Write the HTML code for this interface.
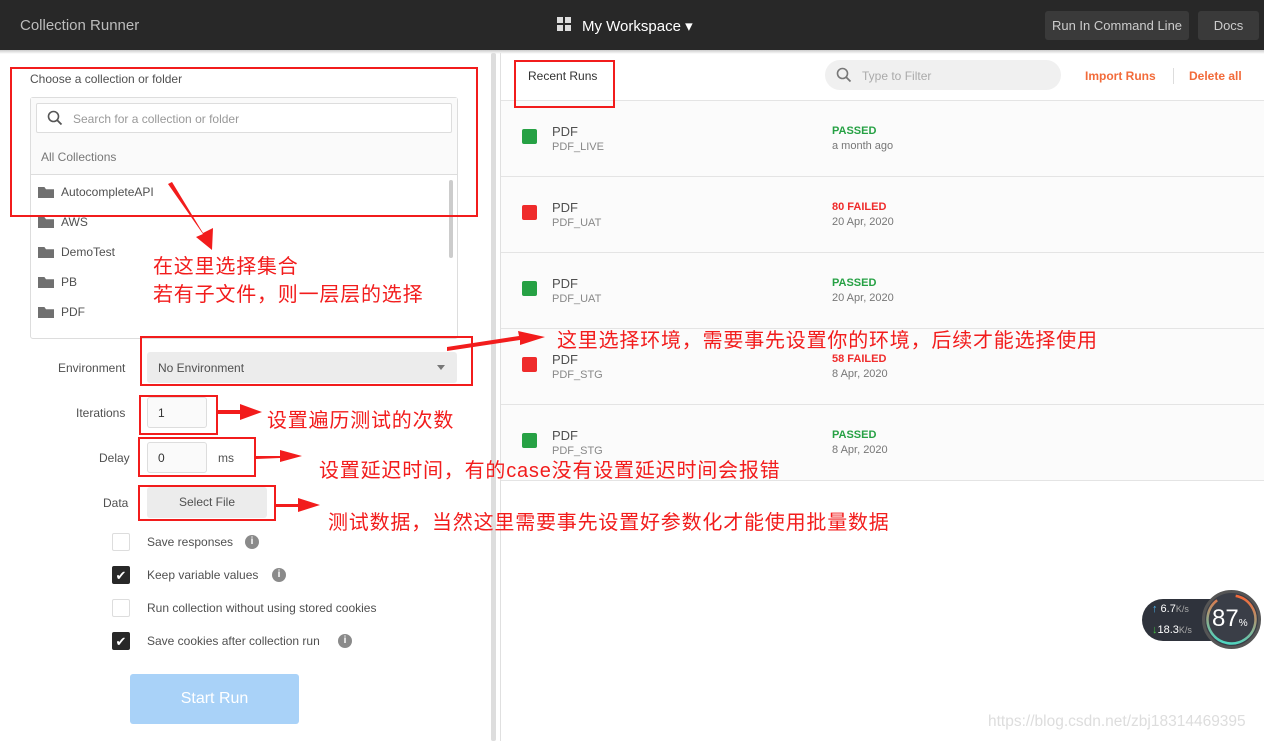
<!DOCTYPE html><html><head><meta charset="utf-8"><style>
*{box-sizing:border-box}body{margin:0;width:1264px;height:741px;overflow:hidden;background:#fff;font-family:"Liberation Sans","Noto Sans CJK SC",sans-serif;position:relative;color:#505050}
.a{position:absolute}
.hd{left:0;top:0;width:1264px;height:50px;background:#282828}
.s{font-size:12px;color:#505050}
.red{border:2px solid #f21c1c}
.cn{color:#f21c1c;font-size:20px;letter-spacing:0.8px;font-family:"Liberation Sans","Noto Sans CJK SC",sans-serif;white-space:nowrap}
.fold{width:16px;height:11px;background:#707070;clip-path:polygon(0 0,40% 0,50% 20%,100% 20%,100% 100%,0 100%)}
.row{left:501px;width:763px;height:76px;border-bottom:1px solid #e4e4e4;background:#fbfbfb}
.sq{width:15px;height:15px;border-radius:2px}
.cb{width:18px;height:18px;border:1px solid #ddd;border-radius:2px;background:#fff}
.cbk{background:#282828;border-color:#282828;color:#fff;font-size:13px;text-align:center;line-height:17px}
.info{width:14px;height:14px;border-radius:50%;background:#8a8a8a;color:#fff;font-size:10px;font-weight:bold;text-align:center;line-height:14px}
</style></head><body>
<div class="a hd"></div>
<div class="a" style="left:20px;top:17px;color:#bcbcbc;font-size:15px">Collection Runner</div>
<div class="a" style="left:557px;top:17px;width:14px;height:14px;display:grid;grid-template-columns:6px 6px;gap:2px"><i style="background:#ddd"></i><i style="background:#ddd"></i><i style="background:#ddd"></i><i style="background:#ddd"></i></div>
<div class="a" style="left:582px;top:17px;color:#fff;font-size:15px">My Workspace ▾</div>
<div class="a" style="left:1045px;top:11px;width:144px;height:29px;background:#3a3a3a;border-radius:3px;color:#ccc;font-size:13px;text-align:center;line-height:29px">Run In Command Line</div>
<div class="a" style="left:1198px;top:11px;width:61px;height:29px;background:#3a3a3a;border-radius:3px;color:#ccc;font-size:13px;text-align:center;line-height:29px">Docs</div>
<div class="a" style="left:0;top:50px;width:1264px;height:4px;background:linear-gradient(#ccc,#fff)"></div>
<div class="a s" style="left:30px;top:72px">Choose a collection or folder</div>
<div class="a" style="left:30px;top:97px;width:428px;height:242px;border:1px solid #ddd;border-radius:3px;background:#fff"></div>
<div class="a" style="left:31px;top:98px;width:426px;height:77px;background:#fafafa;border-bottom:1px solid #ddd"></div>
<div class="a" style="left:36px;top:103px;width:416px;height:30px;border:1px solid #ddd;border-radius:2px;background:#fff"></div>
<svg class="a" style="left:47px;top:110px" width="16" height="16"><circle cx="6.5" cy="6.5" r="5" fill="none" stroke="#555" stroke-width="1.6"/><path d="M10 10l4.5 4.5" stroke="#555" stroke-width="1.8"/></svg>
<div class="a s" style="left:73px;top:112px;color:#999">Search for a collection or folder</div>
<div class="a s" style="left:41px;top:150px;color:#777">All Collections</div>
<div class="a" style="left:449px;top:180px;width:4px;height:78px;background:#ccc;border-radius:2px"></div>
<div class="a fold" style="left:38px;top:187px"></div><div class="a s" style="left:61px;top:185px">AutocompleteAPI</div>
<div class="a fold" style="left:38px;top:217px"></div><div class="a s" style="left:61px;top:215px">AWS</div>
<div class="a fold" style="left:38px;top:247px"></div><div class="a s" style="left:61px;top:245px">DemoTest</div>
<div class="a fold" style="left:38px;top:277px"></div><div class="a s" style="left:61px;top:275px">PB</div>
<div class="a fold" style="left:38px;top:307px"></div><div class="a s" style="left:61px;top:305px">PDF</div>
<div class="a" style="left:491px;top:53px;width:5px;height:688px;background:#ddd;border-radius:2px"></div>
<div class="a s" style="left:58px;top:361px">Environment</div>
<div class="a" style="left:147px;top:352px;width:310px;height:31px;background:#ececec;border-radius:3px"></div>
<div class="a s" style="left:158px;top:361px">No Environment</div>
<div class="a" style="left:437px;top:365px;border:4px solid transparent;border-top:5px solid #777"></div>
<div class="a s" style="left:76px;top:406px">Iterations</div>
<div class="a" style="left:147px;top:397px;width:60px;height:31px;border:1px solid #ddd;border-radius:3px;background:#fafafa"></div>
<div class="a s" style="left:158px;top:406px;color:#333">1</div>
<div class="a s" style="left:99px;top:451px">Delay</div>
<div class="a" style="left:147px;top:442px;width:60px;height:31px;border:1px solid #ddd;border-radius:3px;background:#fafafa"></div>
<div class="a s" style="left:158px;top:451px;color:#333">0</div>
<div class="a s" style="left:218px;top:451px">ms</div>
<div class="a s" style="left:103px;top:496px">Data</div>
<div class="a s" style="left:147px;top:487px;width:120px;height:31px;background:#ececec;border-radius:3px;text-align:center;line-height:31px">Select File</div>
<div class="a cb" style="left:112px;top:533px"></div><div class="a s" style="left:147px;top:535px">Save responses</div><div class="a info" style="left:245px;top:535px">i</div>
<div class="a cb cbk" style="left:112px;top:566px">✔</div><div class="a s" style="left:147px;top:568px">Keep variable values</div><div class="a info" style="left:272px;top:568px">i</div>
<div class="a cb" style="left:112px;top:599px"></div><div class="a s" style="left:147px;top:601px">Run collection without using stored cookies</div>
<div class="a cb cbk" style="left:112px;top:632px">✔</div><div class="a s" style="left:147px;top:634px">Save cookies after collection run</div><div class="a info" style="left:338px;top:634px">i</div>
<div class="a" style="left:130px;top:674px;width:169px;height:50px;background:#a9d2f8;border-radius:3px;color:#fff;font-size:16px;text-align:center;line-height:50px">Start Run</div>
<div class="a" style="left:500px;top:53px;width:1px;height:688px;background:#e0e0e0"></div>
<div class="a" style="left:501px;top:53px;width:763px;height:48px;border-bottom:1px solid #e4e4e4"></div>
<div class="a s" style="left:528px;top:69px;color:#333">Recent Runs</div>
<div class="a" style="left:825px;top:60px;width:236px;height:30px;background:#f0f0f0;border-radius:15px"></div>
<svg class="a" style="left:836px;top:67px" width="16" height="16"><circle cx="6.5" cy="6.5" r="5" fill="none" stroke="#777" stroke-width="1.6"/><path d="M10 10l4.5 4.5" stroke="#777" stroke-width="1.8"/></svg>
<div class="a s" style="left:862px;top:69px;color:#aaa">Type to Filter</div>
<div class="a s" style="left:1085px;top:69px;color:#f26b3a;font-weight:bold">Import Runs</div>
<div class="a" style="left:1173px;top:68px;width:1px;height:16px;background:#ddd"></div>
<div class="a s" style="left:1189px;top:69px;color:#f26b3a;font-weight:bold">Delete all</div>
<div class="a row" style="top:101px"></div><div class="a row" style="top:177px"></div><div class="a row" style="top:253px"></div><div class="a row" style="top:329px"></div><div class="a row" style="top:405px"></div>
<div class="a sq" style="left:522px;top:129px;background:#26a144"></div><div class="a s" style="left:552px;top:124px;font-size:13px">PDF</div><div class="a s" style="left:552px;top:141px;font-size:11px;color:#888">PDF_LIVE</div><div class="a" style="left:832px;top:125px;font-size:11px;font-weight:bold;color:#26a144">PASSED</div><div class="a" style="left:832px;top:140px;font-size:11px;color:#777">a month ago</div>
<div class="a sq" style="left:522px;top:205px;background:#ef2b2b"></div><div class="a s" style="left:552px;top:200px;font-size:13px">PDF</div><div class="a s" style="left:552px;top:217px;font-size:11px;color:#888">PDF_UAT</div><div class="a" style="left:832px;top:201px;font-size:11px;font-weight:bold;color:#ef2b2b">80 FAILED</div><div class="a" style="left:832px;top:216px;font-size:11px;color:#777">20 Apr, 2020</div>
<div class="a sq" style="left:522px;top:281px;background:#26a144"></div><div class="a s" style="left:552px;top:276px;font-size:13px">PDF</div><div class="a s" style="left:552px;top:293px;font-size:11px;color:#888">PDF_UAT</div><div class="a" style="left:832px;top:277px;font-size:11px;font-weight:bold;color:#26a144">PASSED</div><div class="a" style="left:832px;top:292px;font-size:11px;color:#777">20 Apr, 2020</div>
<div class="a sq" style="left:522px;top:357px;background:#ef2b2b"></div><div class="a s" style="left:552px;top:352px;font-size:13px">PDF</div><div class="a s" style="left:552px;top:369px;font-size:11px;color:#888">PDF_STG</div><div class="a" style="left:832px;top:353px;font-size:11px;font-weight:bold;color:#ef2b2b">58 FAILED</div><div class="a" style="left:832px;top:368px;font-size:11px;color:#777">8 Apr, 2020</div>
<div class="a sq" style="left:522px;top:433px;background:#26a144"></div><div class="a s" style="left:552px;top:428px;font-size:13px">PDF</div><div class="a s" style="left:552px;top:445px;font-size:11px;color:#888">PDF_STG</div><div class="a" style="left:832px;top:429px;font-size:11px;font-weight:bold;color:#26a144">PASSED</div><div class="a" style="left:832px;top:444px;font-size:11px;color:#777">8 Apr, 2020</div>
<div class="a red" style="left:10px;top:67px;width:468px;height:150px"></div>
<div class="a red" style="left:514px;top:60px;width:101px;height:48px"></div>
<div class="a red" style="left:140px;top:336px;width:333px;height:50px"></div>
<div class="a red" style="left:139px;top:395px;width:79px;height:40px"></div>
<div class="a red" style="left:138px;top:437px;width:118px;height:40px"></div>
<div class="a red" style="left:138px;top:485px;width:138px;height:36px"></div>
<svg class="a" style="left:0;top:0" width="1264" height="741"><g fill="#f21c1c">
<polygon points="168,184 172,182 203,233 213,228 212,250 196,237 203,234"/>
<polygon points="447,347 447,351 520,340 520,345 545,337 518,331 519,336"/>
<polygon points="218,410 240,410 240,404 262,412 240,420 240,414 218,414"/>
<polygon points="256,456 280,456 280,450 302,456 280,462 280,458 256,459"/>
<polygon points="276,504 298,504 298,498 320,505 298,512 298,507 276,507"/>
</g></svg>
<div class="a cn" style="left:153px;top:253px;line-height:28px">在这里选择集合<br>若有子文件，则一层层的选择</div>
<div class="a cn" style="left:557px;top:324px">这里选择环境，需要事先设置你的环境，后续才能选择使用</div>
<div class="a cn" style="left:267px;top:404px">设置遍历测试的次数</div>
<div class="a cn" style="left:319px;top:454px">设置延迟时间，有的case没有设置延迟时间会报错</div>
<div class="a cn" style="left:328px;top:506px">测试数据，当然这里需要事先设置好参数化才能使用批量数据</div>
<div class="a" style="left:1142px;top:599px;width:90px;height:42px;background:#2f333c;border-radius:21px"></div>
<div class="a" style="left:1152px;top:603px;font-size:11px;color:#fff"><span style="color:#4ab4f0">↑</span> 6.7<span style="color:#aaa;font-size:9px">K/s</span></div>
<div class="a" style="left:1152px;top:624px;font-size:11px;color:#fff"><span style="color:#3ec03e">↓</span>18.3<span style="color:#aaa;font-size:9px">K/s</span></div>
<div class="a" style="left:1202px;top:590px;width:59px;height:59px;border-radius:50%;background:#3a3e47;border:3px solid #555"></div>
<svg class="a" style="left:1202px;top:590px" width="59" height="59"><circle cx="29.5" cy="29.5" r="24" fill="none" stroke="url(#g)" stroke-width="2.5" stroke-dasharray="131 151" transform="rotate(-80 29.5 29.5)"/><defs><linearGradient id="g"><stop offset="0" stop-color="#4fd6c0"/><stop offset="1" stop-color="#f36a3a"/></linearGradient></defs></svg>
<div class="a" style="left:1212px;top:605px;font-size:24px;color:#fff">87<span style="font-size:10px">%</span></div>
<div class="a" style="left:988px;top:713px;font-size:15.5px;color:#ddd">https://blog.csdn.net/zbj18314469395</div>
</body></html>
